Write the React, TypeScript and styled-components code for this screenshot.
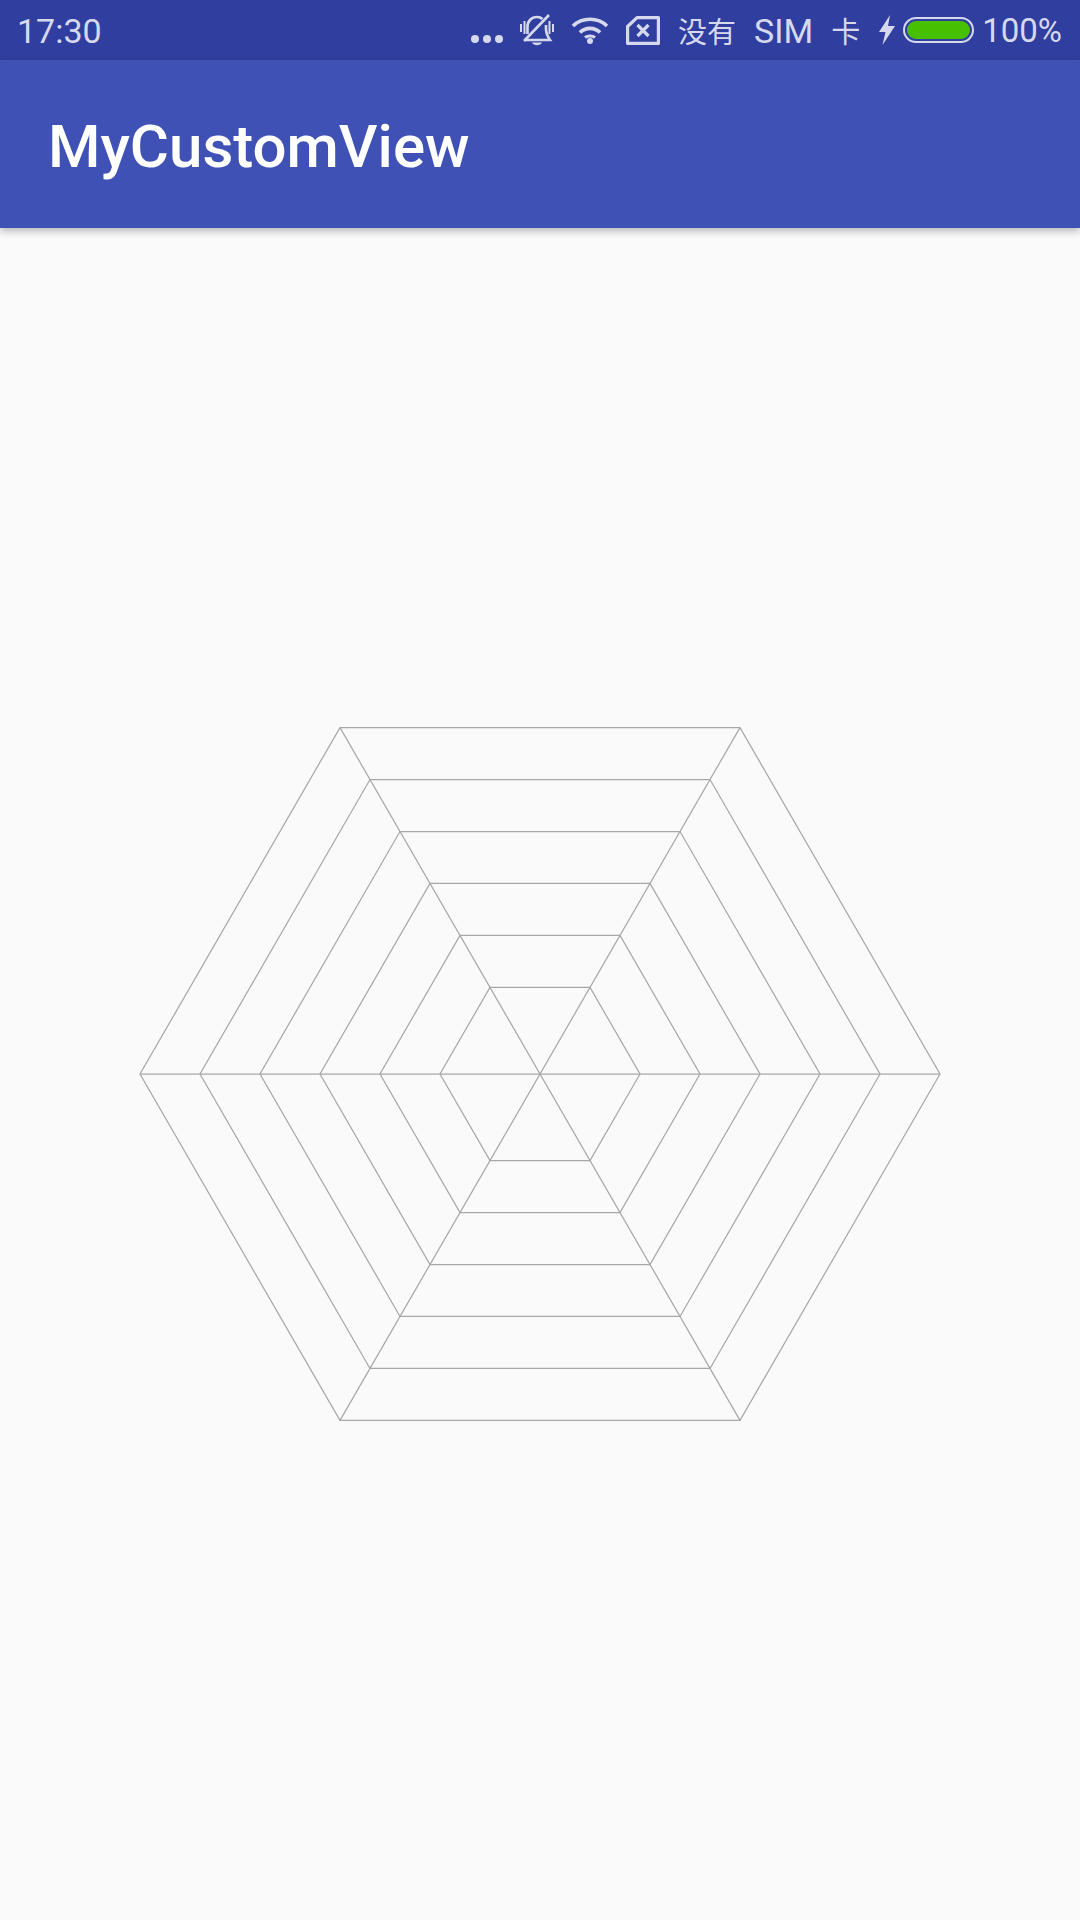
import React from "react";
import styled, { createGlobalStyle } from "styled-components";

const Global = createGlobalStyle`
  html, body { margin: 0; padding: 0; background: #fafafa; }
  #root { width: 1080px; height: 1920px; }
`;

const Screen = styled.div`
  width: 1080px;
  height: 1920px;
  display: flex;
  flex-direction: column;
  background: #fafafa;
  overflow: hidden;
`;

const StatusBar = styled.div`
  height: 60px;
  flex: none;
  display: flex;
  align-items: center;
  padding: 0 18px 0 17px;
  background: #303f9f;
  color: #d6d9ee;
  font-family: Roboto, sans-serif;
`;

const Clock = styled.span`
  padding-top: 2px;
  font-size: 34px;
  font-weight: 400;
  line-height: 58px;
`;

const Tray = styled.div`
  margin-left: auto;
  display: flex;
  align-items: center;
  height: 60px;
`;

const Glyph = styled.svg<{ $gap: number; $drop?: number }>`
  display: block;
  flex: none;
  margin-left: ${(p) => p.$gap}px;
  margin-top: ${(p) => p.$drop ?? 0}px;
`;

const Carrier = styled.div`
  margin-left: 18px;
  display: flex;
  align-items: center;
  gap: 18px;
  white-space: nowrap;
`;

const CarrierCjk = styled.span`
  font-family: "Noto Sans CJK SC", sans-serif;
  font-size: 29px;
  font-weight: 400;
  line-height: 60px;
`;

const CarrierLatin = styled.span`
  padding-top: 2px;
  font-family: Roboto, sans-serif;
  font-size: 34px;
  font-weight: 400;
  line-height: 58px;
`;

const Level = styled.span`
  margin-left: 8px;
  padding-top: 2px;
  font-size: 33px;
  font-weight: 400;
  line-height: 58px;
`;

const AppBar = styled.header`
  position: relative;
  height: 168px;
  flex: none;
  display: flex;
  align-items: center;
  padding: 5px 48px 0;
  box-sizing: border-box;
  background: #3f51b5;
  box-shadow: 0 3px 8px rgba(0, 0, 0, 0.28);
`;

const Title = styled.h1`
  margin: 0;
  color: #ffffff;
  font-family: Roboto, sans-serif;
  font-size: 60px;
  font-weight: 500;
  line-height: 72px;
`;

const Content = styled.main`
  flex: 1;
  display: flex;
  align-items: center;
  justify-content: center;
`;

const ICON = "#d6d9ee";
const CX = 410;
const CY = 360;
const RINGS = [400, 340, 280, 220, 160, 100];

const vertex = (r: number, i: number) => {
  const a = (Math.PI / 3) * i;
  return [CX + r * Math.cos(a), CY + r * Math.sin(a)] as const;
};

const Radar = () => (
  <svg width={820} height={720} viewBox="0 0 820 720" fill="none" stroke="#a8a8a8" strokeWidth={1.25}>
    {RINGS.map((r) => (
      <polygon key={r} points={[0, 1, 2, 3, 4, 5].map((i) => vertex(r, i).join(",")).join(" ")} />
    ))}
    {[0, 1, 2].map((i) => {
      const [x1, y1] = vertex(400, i);
      const [x2, y2] = vertex(400, i + 3);
      return <line key={i} x1={x1} y1={y1} x2={x2} y2={y2} />;
    })}
  </svg>
);

const Dots = () => (
  <Glyph $gap={0} $drop={18} width={32} height={10} viewBox="0 0 32 10" fill={ICON}>
    <circle cx="4" cy="5" r="4" />
    <circle cx="16" cy="5" r="4" />
    <circle cx="28" cy="5" r="4" />
  </Glyph>
);

const MutedBell = () => (
  <Glyph $gap={17} width={34} height={32} viewBox="0 0 34 32" fill="none" stroke={ICON} strokeWidth={2.6}>
    <path d="M7.500 20V13C7.500 7 11.500 3 17 3C19 3 21 3.600 22.500 5" />
    <path d="M26 11V15C26 20 28 23 30 26H5" />
    <path d="M4 27L29 1" />
    <path d="M12 28.500H22C20.500 32 13.500 32 12 28.500Z" fill={ICON} stroke="none" />
    <path d="M1 10V18M4.500 7V20M29.500 7V20M33 10V18" strokeWidth={2} />
  </Glyph>
);

const Wifi = () => (
  <Glyph $gap={17} width={38} height={28} viewBox="0 0 38 28" fill="none" stroke={ICON} strokeWidth={3.6}>
    <path d="M2 10C11 1 27 1 36 10" />
    <path d="M9 16.500C14.500 11 23.500 11 29 16.500" />
    <path d="M14 21.500C16.500 19.500 21.500 19.500 24 21.500" strokeWidth={3} />
    <circle cx="19" cy="25" r="3" fill={ICON} stroke="none" />
  </Glyph>
);

const SimOff = () => (
  <Glyph $gap={17} width={34} height={29} viewBox="0 0 34 29" fill="none" stroke={ICON} strokeWidth={3.2}>
    <path d="M11 1.600H32.400V27.400H1.600V10.500Z" strokeLinejoin="round" />
    <path d="M11.500 9L22.500 20M22.500 9L11.500 20" />
  </Glyph>
);

const Bolt = () => (
  <Glyph $gap={19} width={16} height={30} viewBox="0 0 16 30" fill={ICON}>
    <path d="M11 0L0 17H6.500L3.500 30L16 11H9Z" />
  </Glyph>
);

const Battery = () => (
  <Glyph $gap={8} width={71} height={26} viewBox="0 0 71 26">
    <rect x="1" y="1" width="69" height="24" rx="12" fill="none" stroke={ICON} strokeWidth={2} />
    <rect x="4" y="4" width="63" height="18" rx="9" fill="#46c000" />
  </Glyph>
);

export default function App() {
  return (
    <Screen>
      <Global />
      <StatusBar>
        <Clock>17:30</Clock>
        <Tray>
          <Dots />
          <MutedBell />
          <Wifi />
          <SimOff />
          <Carrier>
            <CarrierCjk>没有</CarrierCjk>
            <CarrierLatin>SIM</CarrierLatin>
            <CarrierCjk>卡</CarrierCjk>
          </Carrier>
          <Bolt />
          <Battery />
          <Level>100%</Level>
        </Tray>
      </StatusBar>
      <AppBar>
        <Title>MyCustomView</Title>
      </AppBar>
      <Content>
        <Radar />
      </Content>
    </Screen>
  );
}
